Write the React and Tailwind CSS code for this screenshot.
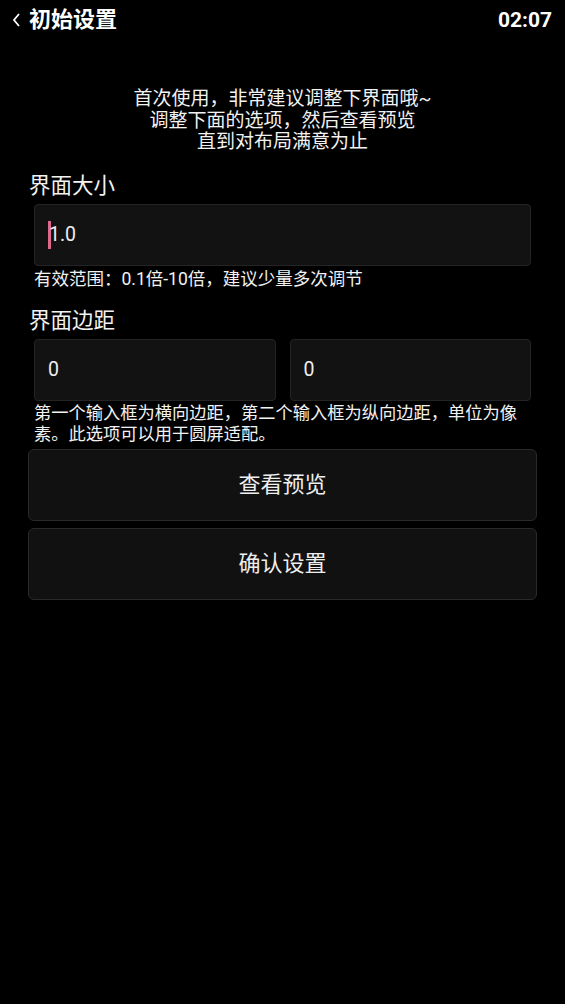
const FONT = { fontFamily: "Roboto, 'Noto Sans CJK SC', sans-serif" }

function Field({ value, caret }) {
    return (
        <div className="flex-1 h-[62px] flex items-center px-[13px] bg-[#121212] border border-[#242424] rounded-[4px]">
            {caret && <span className="w-[3px] h-[28px] bg-[#e0688a] -mr-[2px]" />}
            <span className="text-[19.5px] text-[#eeeeee]">{value}</span>
        </div>
    )
}

function ActionButton({ children }) {
    return (
        <button className="w-full h-[72px] flex items-center justify-center bg-[#111111] border border-[#2a2a2a] rounded-[6px] text-[22px] text-[#eeeeee]">
            {children}
        </button>
    )
}

export default function App() {
    return (
        <div className="w-[565px] h-[1004px] bg-black text-white overflow-hidden" style={FONT}>
            <header className="h-[40px] flex items-center justify-between pl-[11px] pr-[13px]">
                <div className="flex items-center gap-[6px]">
                    <svg width="12" height="16" viewBox="0 0 12 16" fill="none" stroke="#ffffff" strokeWidth="1.8">
                        <path d="M8 2 L3 8 L8 14" />
                    </svg>
                    <span className="text-[22px] font-bold leading-none">初始设置</span>
                </div>
                <span className="text-[21px] font-bold leading-none">02:07</span>
            </header>

            <p className="mt-[48px] text-center text-[19px] leading-[21.5px] text-[#f2f2f2]">
                首次使用，非常建议调整下界面哦~
                <br />
                调整下面的选项，然后查看预览
                <br />
                直到对布局满意为止
            </p>

            <section className="px-[28px]">
                <div className="mt-[19px] pl-[1px] text-[21.5px] leading-[27px] text-[#f2f2f2]">界面大小</div>
                <div className="mt-[5px] mx-[6px] flex">
                    <Field value="1.0" caret />
                </div>
                <p className="mt-[3px] mx-[6px] text-[17.5px] leading-[20px] text-[#f2f2f2]">
                    有效范围：0.1倍-10倍，建议少量多次调节
                </p>

                <div className="mt-[18px] pl-[1px] text-[21.5px] leading-[27px] text-[#f2f2f2]">界面边距</div>
                <div className="mt-[5px] mx-[6px] flex gap-[14px]">
                    <Field value="0" />
                    <Field value="0" />
                </div>
                <p className="mt-[2px] mx-[6px] w-[492px] text-[17.25px] leading-[21.5px] text-[#f2f2f2]">
                    第一个输入框为横向边距，第二个输入框为纵向边距，单位为像素。此选项可以用于圆屏适配。
                </p>

                <div className="mt-[3px] flex flex-col gap-[7px]">
                    <ActionButton>查看预览</ActionButton>
                    <ActionButton>确认设置</ActionButton>
                </div>
            </section>
        </div>
    )
}
